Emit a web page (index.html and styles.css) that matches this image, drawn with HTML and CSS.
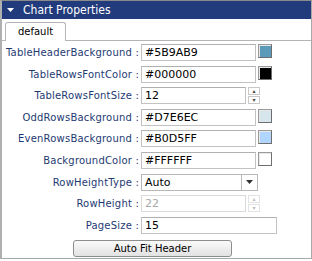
FILE: index.html
```html
<!DOCTYPE html>
<html>
<head>
<meta charset="utf-8">
<link rel="stylesheet" href="styles.css">
</head>
<body>
<div class="panel">
  <div class="header">
    <svg class="caret" width="7" height="4" viewBox="0 0 7 4"><path d="M0 0H7L3.5 4Z" fill="#fff"/></svg>
    <span class="title">Chart Properties</span>
  </div>
  <div class="tabs">
    <div class="tab">default</div>
  </div>
  <div class="body">
    <div class="grid">
      <label class="lbl">TableHeaderBackground :</label>
      <div class="ctl"><span class="inp w114">#5B9AB9</span><span class="sw" style="background:#5B9AB9"></span></div>

      <label class="lbl">TableRowsFontColor :</label>
      <div class="ctl"><span class="inp w114">#000000</span><span class="sw" style="background:#000000"></span></div>

      <label class="lbl">TableRowsFontSize :</label>
      <div class="ctl"><span class="inp w104">12</span><span class="spin"><span class="sb">&#9652;</span><span class="sb">&#9662;</span></span></div>

      <label class="lbl">OddRowsBackground :</label>
      <div class="ctl"><span class="inp w114">#D7E6EC</span><span class="sw" style="background:#D7E6EC"></span></div>

      <label class="lbl">EvenRowsBackground :</label>
      <div class="ctl"><span class="inp w114">#B0D5FF</span><span class="sw" style="background:#B0D5FF"></span></div>

      <label class="lbl">BackgroundColor :</label>
      <div class="ctl"><span class="inp w114">#FFFFFF</span><span class="sw" style="background:#FFFFFF"></span></div>

      <label class="lbl">RowHeightType :</label>
      <div class="ctl"><span class="sel"><span class="selv">Auto</span><span class="selb"><svg width="7" height="4" viewBox="0 0 7 4"><path d="M0 0H7L3.5 4Z" fill="#333"/></svg></span></span></div>

      <label class="lbl">RowHeight :</label>
      <div class="ctl"><span class="inp w104 dis">22</span><span class="spin dis"><span class="sb">&#9652;</span><span class="sb">&#9662;</span></span></div>

      <label class="lbl">PageSize :</label>
      <div class="ctl"><span class="inp w135">15</span></div>
    </div>
    <div class="btnrow"><button class="btn">Auto Fit Header</button></div>
  </div>
</div>
</body>
</html>
```
FILE: styles.css
```css
html, body { margin: 0; padding: 0; background: #fff; }
body { font-family: "DejaVu Sans", Verdana, sans-serif; font-size: 10px; }
.panel {
  width: 309px; height: 257px;
  border: 1px solid #a8a8a8; border-top: 1px solid #8a8a8a;
  border-left: 2px solid #b0b0b0;
  box-sizing: content-box;
  display: flex; flex-direction: column;
}
.header {
  height: 18px; background: #213b7c; color: #fff;
  display: flex; align-items: center;
}
.caret { margin-left: 5px; margin-right: 9px; }
.title { font-size: 12px; font-family: "DejaVu Sans Condensed", "DejaVu Sans", sans-serif; }
.tabs {
  margin-top: 3px; height: 18px; border-bottom: 1px solid #b5b5b5;
  display: flex; padding-left: 3px;
}
.tab {
  width: 61px; box-sizing: border-box;
  border: 1px solid #b5b5b5; border-bottom: none;
  border-radius: 3px 3px 0 0; background: #fff;
  text-align: center; line-height: 17px; color: #000;
  margin-bottom: -1px; height: 19px;
}
.body { flex: 1; padding-top: 3px; }
.grid {
  display: grid; grid-template-columns: 137px 1fr;
  grid-auto-rows: 21.6px; column-gap: 2px;
}
.lbl {
  text-align: right; color: #1e3a72; line-height: 18px; white-space: nowrap;
  letter-spacing: 0.2px;
}
.ctl { display: flex; align-items: flex-start; }
.inp {
  height: 17px; box-sizing: border-box; border: 1px solid #c2c2c2;
  border-top-color: #b0b0b0;
  padding-left: 3px; line-height: 15px; color: #000; font-size: 11px;
  display: block; background: #fff;
}
.w114 { width: 115px; }
.w104 { width: 105px; }
.w135 { width: 136px; }
.dis { color: #a8a8a8; border-color: #dadada; }
.sw {
  width: 14px; height: 14px; margin-left: 2px; box-sizing: border-box;
  border: 1px solid #9a9a9a; border-right-color: #6e6e6e; border-bottom-color: #6e6e6e;
  box-shadow: inset 1px 1px 0 #e8e8e8;
  display: block;
}
.spin {
  display: flex; flex-direction: column; margin-left: 2px; width: 12px; height: 17px;
}
.sb {
  height: 8px; width: 12px; box-sizing: border-box; border: 1px solid #c8c8c8;
  font-size: 6px; line-height: 6px; text-align: center; color: #444;
  display: block; margin-bottom: 1px;
}
.spin.dis .sb { border-color: #e2e2e2; color: #bbb; }
.sel {
  display: flex; width: 117px; height: 17px; box-sizing: border-box;
  border: 1px solid #b8b8b8;
}
.selv { flex: 1; padding-left: 3px; line-height: 15px; font-size: 11px; color: #000; }
.selb {
  width: 15px; border-left: 1px solid #b8b8b8; display: flex; align-items: center; justify-content: center;
}
.btnrow { display: flex; padding-left: 71px; margin-top: 2px; }
.btn {
  width: 159px; height: 17px; padding: 0;
  border: 1px solid #8e8e8e; border-radius: 3px;
  background: linear-gradient(#fafafa, #e2e2e2);
  font-family: "DejaVu Sans", sans-serif; font-size: 10px; color: #000;
}
```
